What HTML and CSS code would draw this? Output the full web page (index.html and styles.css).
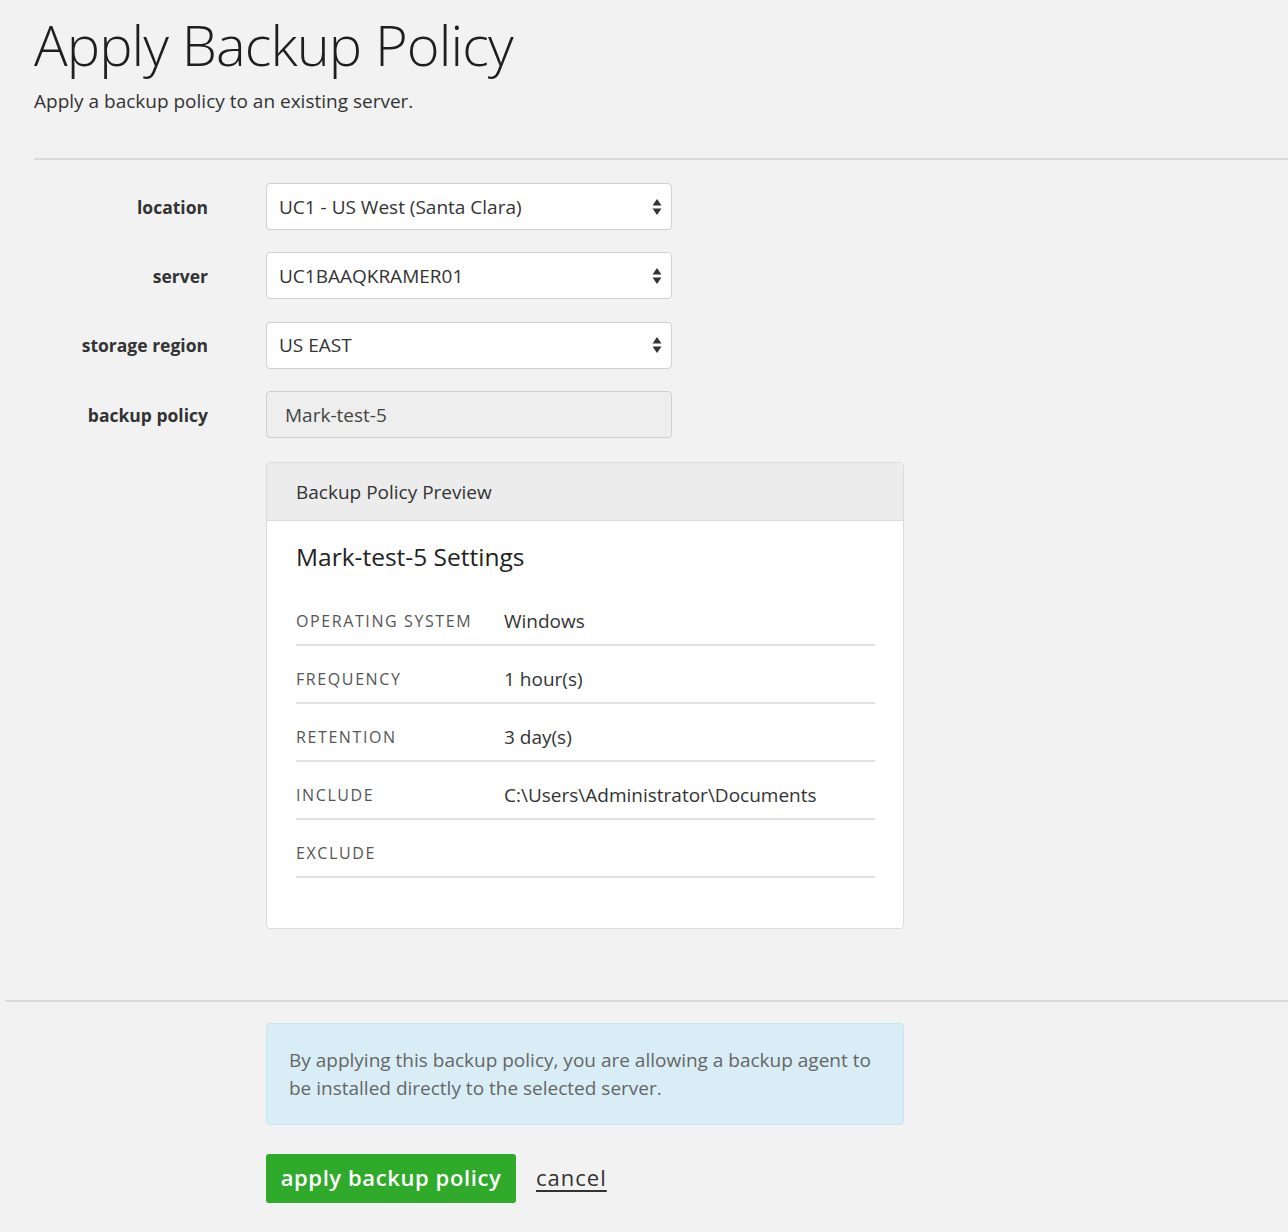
FILE: index.html
```html
<!DOCTYPE html>
<html lang="en">
<head>
<meta charset="utf-8">
<title>Apply Backup Policy</title>
<link rel="stylesheet" href="styles.css">
</head>
<body>
<div class="page">
  <header class="page-head">
    <h1 class="title">Apply Backup Policy</h1>
    <p class="subtitle">Apply a backup policy to an existing server.</p>
  </header>
  <div class="rule rule-top"></div>

  <div class="form">
    <label class="label">location</label>
    <div class="select"><span class="select-text">UC1 - US West (Santa Clara)</span><svg class="arrows" width="10" height="18" viewBox="0 0 10 18"><path d="M5 1 L9.5 7.5 H0.5 Z" fill="#333"/><path d="M5 17 L9.5 10.5 H0.5 Z" fill="#333"/></svg></div>

    <label class="label">server</label>
    <div class="select"><span class="select-text">UC1BAAQKRAMER01</span><svg class="arrows" width="10" height="18" viewBox="0 0 10 18"><path d="M5 1 L9.5 7.5 H0.5 Z" fill="#333"/><path d="M5 17 L9.5 10.5 H0.5 Z" fill="#333"/></svg></div>

    <label class="label">storage region</label>
    <div class="select"><span class="select-text">US EAST</span><svg class="arrows" width="10" height="18" viewBox="0 0 10 18"><path d="M5 1 L9.5 7.5 H0.5 Z" fill="#333"/><path d="M5 17 L9.5 10.5 H0.5 Z" fill="#333"/></svg></div>

    <label class="label">backup policy</label>
    <div class="input-readonly">Mark-test-5</div>
  </div>

  <section class="panel">
    <div class="panel-head">Backup Policy Preview</div>
    <div class="panel-body">
      <h2 class="settings-title">Mark-test-5 Settings</h2>
      <div class="settings">
        <div class="row"><span class="key">Operating System</span><span class="val">Windows</span></div>
        <div class="row"><span class="key">Frequency</span><span class="val">1 hour(s)</span></div>
        <div class="row"><span class="key">Retention</span><span class="val">3 day(s)</span></div>
        <div class="row"><span class="key">Include</span><span class="val">C:\Users\Administrator\Documents</span></div>
        <div class="row"><span class="key">Exclude</span><span class="val"></span></div>
      </div>
    </div>
  </section>

  <div class="rule rule-bottom"></div>

  <div class="alert">By applying this backup policy, you are allowing a backup agent to be installed directly to the selected server.</div>

  <div class="actions">
    <button class="btn-apply" type="button">apply backup policy</button>
    <a class="cancel" href="#">cancel</a>
  </div>
</div>
</body>
</html>
```
FILE: styles.css
```css
* { box-sizing: border-box; }
html, body { margin: 0; padding: 0; }
body {
  background: #f2f2f2;
  font-family: "Open Sans", "DejaVu Sans", sans-serif;
  color: #333;
  width: 1288px;
  min-height: 1232px;
  overflow: hidden;
}
.page { padding-top: 10px; }
.page-head { padding-left: 34px; }
.title {
  margin: 0;
  font-weight: 300;
  font-size: 56px;
  line-height: 68px;
  color: #1e1e1e;
  letter-spacing: -0.9px;
}
.subtitle {
  margin: 10px 0 0;
  font-size: 19px;
  line-height: 26px;
  font-weight: 400;
  color: #333;
}
.rule { border-top: 2px solid #dadada; }
.rule-top { margin: 44px 0 0 34px; }
.form {
  display: grid;
  grid-template-columns: 208px 406px;
  column-gap: 58px;
  row-gap: 22.4px;
  align-items: center;
  margin-top: 23px;
}
.label {
  text-align: right;
  font-weight: 700;
  font-size: 17.5px;
  color: #333;
}
.select, .input-readonly {
  height: 47px;
  border: 1px solid #d0d0d0;
  border-radius: 4px;
  background: #fff;
  display: flex;
  align-items: center;
  font-size: 19px;
  color: #333;
}
.select { justify-content: space-between; padding: 0 9px 0 12px; }
.arrows { display: block; }
.input-readonly { background: #eee; padding-left: 18px; color: #444; }
.panel {
  margin: 24px 0 0 266px;
  width: 638px;
  border: 1px solid #dcdcdc;
  border-radius: 4px;
  background: #fff;
  overflow: hidden;
}
.panel-head {
  height: 58px;
  background: #ececec;
  border-bottom: 1px solid #dcdcdc;
  display: flex;
  align-items: center;
  padding-left: 29px;
  font-size: 19px;
  color: #333;
}
.panel-body { padding: 18px 28px 50px 29px; }
.settings-title {
  margin: 0;
  font-weight: 400;
  font-size: 24.5px;
  line-height: 36px;
  color: #222;
}
.settings { margin-top: 13px; }
.row {
  display: flex;
  align-items: center;
  height: 58px;
  padding-top: 10px;
  border-bottom: 2px solid #e2e2e2;
}
.key {
  width: 208px;
  text-transform: uppercase;
  letter-spacing: 1.6px;
  font-size: 16px;
  color: #555;
}
.val { font-size: 19px; color: #333; }
.rule-bottom { margin: 71px 0 0 5px; }
.alert {
  margin: 21px 0 0 266px;
  width: 638px;
  background: #d9edf7;
  border: 1px solid #c4e6f2;
  border-radius: 4px;
  padding: 22px 22px;
  font-size: 19px;
  line-height: 28px;
  color: #666;
}
.actions {
  margin: 29px 0 0 266px;
  display: flex;
  align-items: center;
  gap: 20px;
}
.btn-apply {
  height: 49px;
  width: 250px;
  border: 0;
  border-radius: 3px;
  background: #2faa2b;
  color: #fff;
  font-family: inherit;
  font-weight: 600;
  font-size: 22px;
  letter-spacing: 0.6px;
  padding: 0 0 4px;
}
.cancel {
  color: #333;
  font-size: 22px;
  text-decoration: underline;
  text-underline-offset: 4px;
  letter-spacing: 1px;
  margin-top: -4px;
}
```
